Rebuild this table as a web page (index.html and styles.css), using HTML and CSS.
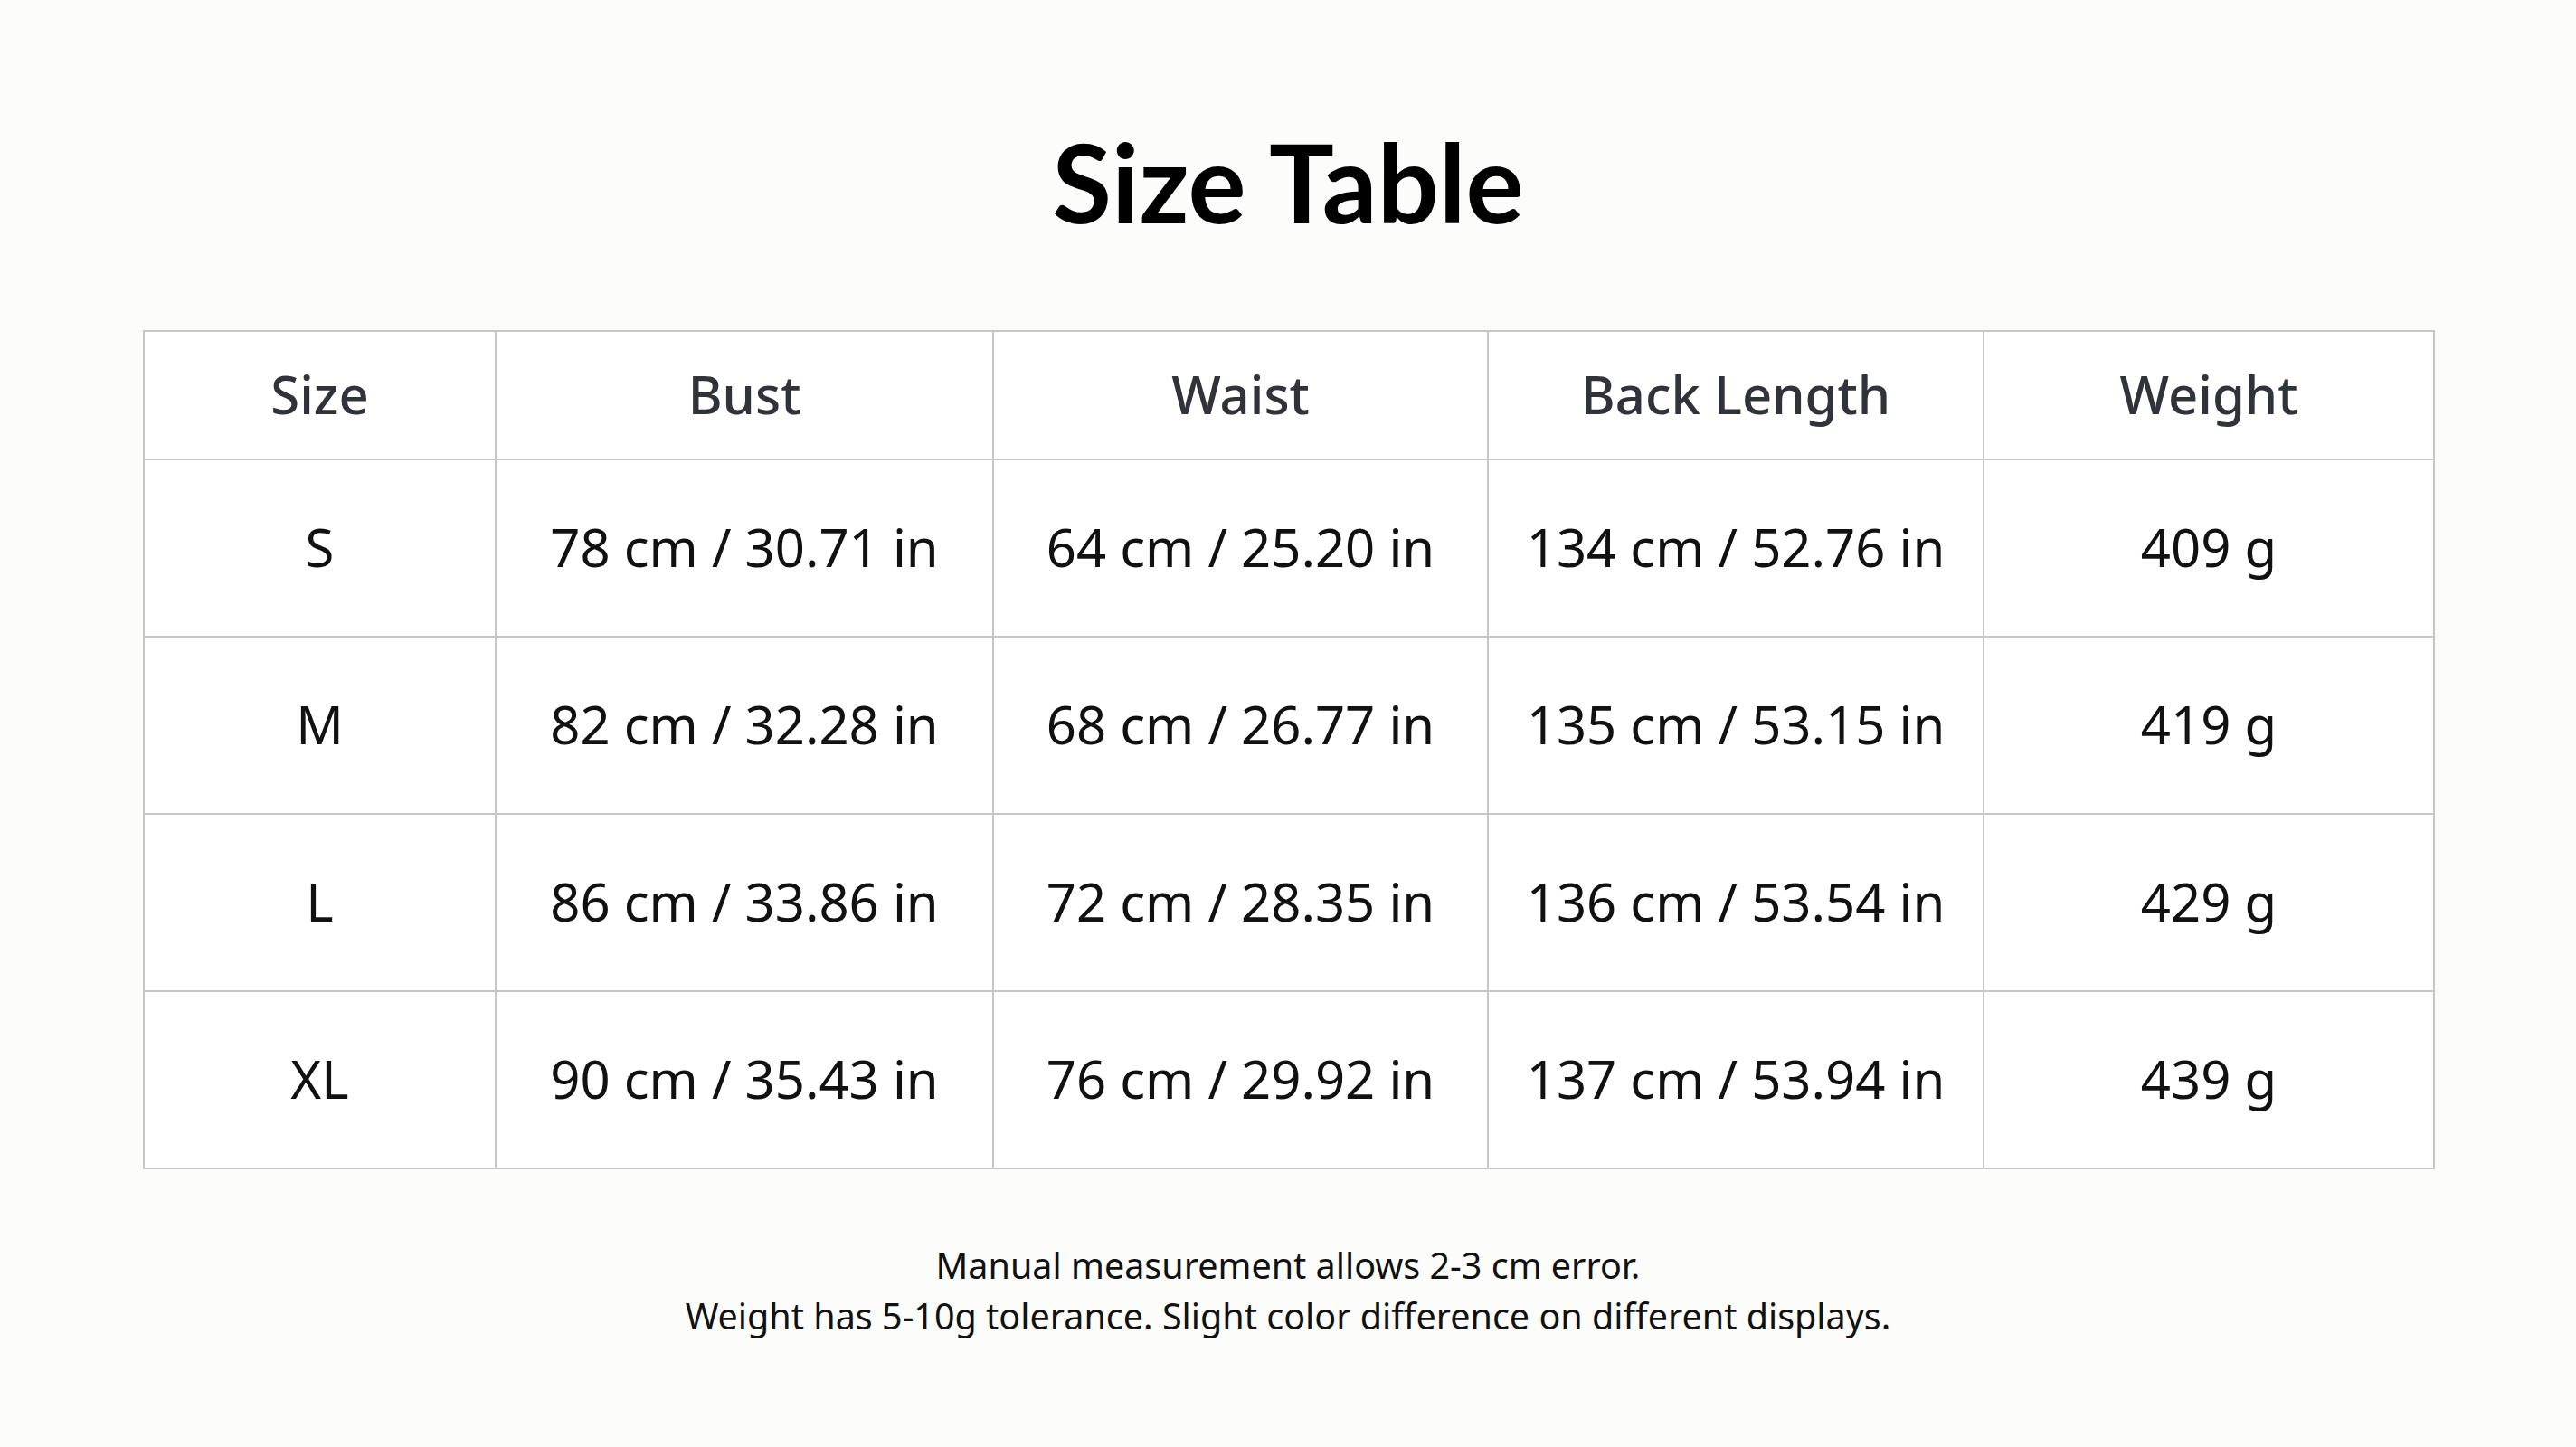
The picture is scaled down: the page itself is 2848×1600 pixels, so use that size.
FILE: index.html
```html
<!DOCTYPE html>
<html lang="en">
<head>
<meta charset="utf-8">
<title>Size Table</title>
<link rel="stylesheet" href="styles.css">
</head>
<body>
<main class="page">
  <h1 class="title">Size Table</h1>
  <table class="sizes">
    <colgroup>
      <col class="c1"><col class="c2"><col class="c3"><col class="c4"><col class="c5">
    </colgroup>
    <thead>
      <tr><th>Size</th><th>Bust</th><th>Waist</th><th>Back Length</th><th>Weight</th></tr>
    </thead>
    <tbody>
      <tr><td>S</td><td>78 cm / 30.71 in</td><td>64 cm / 25.20 in</td><td>134 cm / 52.76 in</td><td>409 g</td></tr>
      <tr><td>M</td><td>82 cm / 32.28 in</td><td>68 cm / 26.77 in</td><td>135 cm / 53.15 in</td><td>419 g</td></tr>
      <tr><td>L</td><td>86 cm / 33.86 in</td><td>72 cm / 28.35 in</td><td>136 cm / 53.54 in</td><td>429 g</td></tr>
      <tr><td>XL</td><td>90 cm / 35.43 in</td><td>76 cm / 29.92 in</td><td>137 cm / 53.94 in</td><td>439 g</td></tr>
    </tbody>
  </table>
  <div class="notes">
    <p>Manual measurement allows 2-3 cm error.</p>
    <p>Weight has 5-10g tolerance. Slight color difference on different displays.</p>
  </div>
</main>
</body>
</html>
```
FILE: styles.css
```css
html, body {
  margin: 0;
  padding: 0;
  background: #fcfcfa;
}
body {
  width: 2848px;
  height: 1600px;
  overflow: hidden;
  font-family: "Noto Sans", "DejaVu Sans", sans-serif;
  color: #111;
}
.page {
  display: flex;
  flex-direction: column;
  align-items: center;
}
.title {
  margin: 129px 0 0;
  font-family: Lato, "Noto Sans", sans-serif;
  font-weight: 700;
  font-size: 120px;
  line-height: 144px;
  color: #000;
}
.sizes {
  margin-top: 92px;
  border-collapse: collapse;
  background: #fff;
  table-layout: fixed;
  width: 2534px;
  margin-left: 2px;
}
.sizes th, .sizes td {
  border: 2px solid #c6c6c6;
  text-align: center;
  vertical-align: middle;
  padding: 0 0 4px;
  font-size: 58px;
}
.sizes th {
  height: 136px;
  font-weight: 500;
  color: #30333a;
}
.sizes td {
  height: 190px;
  font-weight: 400;
  color: #111;
}
.c1 { width: 389px; }
.c2 { width: 550px; }
.c3 { width: 547px; }
.c4 { width: 548px; }
.c5 { width: 498px; }
.notes {
  margin-top: 78px;
  text-align: center;
  font-size: 39.5px;
  line-height: 56px;
  color: #111;
}
.notes p {
  margin: 0;
}
```
